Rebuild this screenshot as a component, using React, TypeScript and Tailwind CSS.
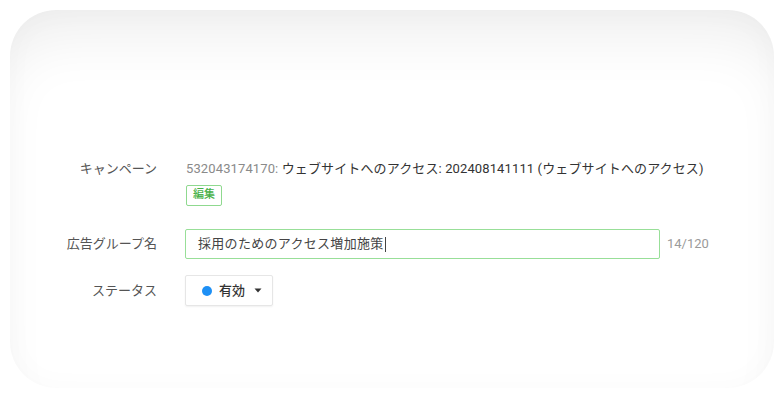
import React from "react";

const font = { fontFamily: "Roboto, 'Noto Sans CJK JP', sans-serif" };

export default function App() {
  const label = "w-[117px] shrink-0 text-right text-[13px] text-[#555]";

  return (
    <div className="w-[784px] h-[398px] bg-white p-[10px]" style={font}>
      <div className="h-[378px] rounded-[46px] bg-white shadow-[inset_0_44px_60px_-20px_rgba(0,0,0,0.07),inset_0_0_30px_rgba(0,0,0,0.025)] pt-[149px] pl-[30px]">
        {/* Campaign */}
        <div className="flex gap-[29px]">
          <div className={`${label} leading-[20px]`}>キャンペーン</div>
          <div>
            <div className="text-[13px] leading-[20px] tracking-[0.12px] text-[#333]">
              <span className="text-[#8a8a8a]">532043174170:</span> ウェブサイトへのアクセス: 202408141111 (ウェブサイトへのアクセス)
            </div>
            <button className="mt-[6px] h-[21px] w-[36px] border border-[#8fd98f] rounded-[2px] text-[11px] font-medium text-[#46b046] flex items-center justify-center">
              編集
            </button>
          </div>
        </div>

        {/* Ad group name */}
        <div className="mt-[23px] flex items-center gap-[28px]">
          <div className={label}>広告グループ名</div>
          <div className="w-[475px] h-[30px] border border-[#98df98] rounded-[2px] flex items-center pl-[12px] text-[13px] tracking-[0.3px] text-[#444]">
            採用のためのアクセス増加施策
            <span className="ml-[1px] inline-block w-px h-[15px] bg-[#444]" />
          </div>
          <div className="-ml-[21px] text-[13px] text-[#9a9a9a]">14/120</div>
        </div>

        {/* Status */}
        <div className="mt-[16px] flex items-center gap-[28px]">
          <div className={label}>ステータス</div>
          <button className="h-[31px] w-[88px] border border-[#e6e6e6] rounded-[2px] shadow-[0_1px_2px_rgba(0,0,0,0.06)] flex items-center pl-[16px] gap-[7px] text-[13px] font-medium text-[#333]">
            <span className="w-[10px] h-[10px] rounded-full bg-[#1e90f5]" />
            有効
            <svg width="8" height="5" viewBox="0 0 8 5" className="ml-[2px]">
              <path d="M0.5 0.5 L7.5 0.5 L4 4.5 Z" fill="#333" />
            </svg>
          </button>
        </div>
      </div>
    </div>
  );
}
